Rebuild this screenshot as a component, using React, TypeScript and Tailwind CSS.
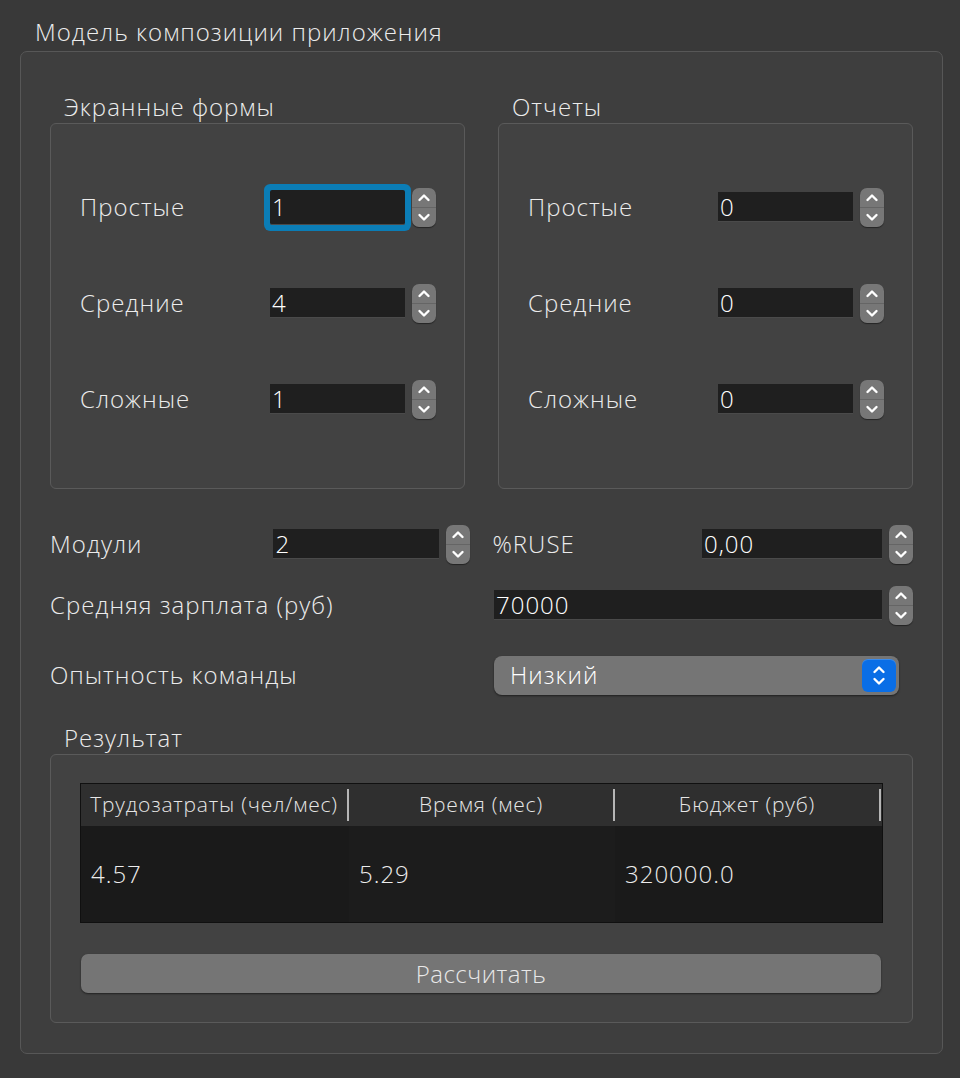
import React from 'react';

const font = { fontFamily: '"Open Sans", "Noto Sans", sans-serif' };

const Chevron = ({ up }: { up?: boolean }) => (
  <svg width="14" height="9" viewBox="0 0 14 9">
    <path
      d={up ? 'M2.5 7L7 2.5L11.5 7' : 'M2.5 2L7 6.5L11.5 2'}
      stroke="white"
      strokeWidth="2.4"
      fill="none"
      strokeLinecap="round"
      strokeLinejoin="round"
    />
  </svg>
);

const Arrows = () => (
  <div className="flex h-[39px] w-[24px] flex-col items-center justify-between rounded-[7px] bg-[#777777] py-[5px] shadow-[0_1px_1px_rgba(0,0,0,0.45)]">
    <Chevron up />
    <div className="h-px w-full bg-[#656565]" />
    <Chevron />
  </div>
);

interface SpinProps {
  value: string;
  width: string;
  focused?: boolean;
}

// input field + up/down buttons
const SpinBox: React.FC<SpinProps> = ({ value, width, focused }) => (
  <div className="flex items-center gap-[7px]">
    <div
      className={`flex h-[30px] items-center border-b border-[#4a4a4a] bg-[#1f1f1f] pl-[2px] text-[24px] font-light leading-none tracking-[1px] text-white ${width} ${
        focused ? 'h-[35px] rounded-[2px] shadow-[0_0_0_6px_#0b7db6]' : ''
      }`}
    >
      {value}
    </div>
    <Arrows />
  </div>
);

const GroupBox = ({ title, className, boxClass, children }: { title: string; className?: string; boxClass?: string; children: React.ReactNode }) => (
  <div className={`flex flex-col ${className ?? ''}`}>
    <div className="h-[33px] pl-[14px] text-[24px] font-light leading-[33px] tracking-[1px] text-[#ececec]">{title}</div>
    <div className={`rounded-[6px] border border-[#5a5a5a] bg-[#424242] ${boxClass ?? ''}`}>{children}</div>
  </div>
);

const FormRows = ({ values, focusFirst }: { values: string[]; focusFirst?: boolean }) => {
  const labels = ['Простые', 'Средние', 'Сложные'];
  return (
    <div className="flex flex-col gap-[56px] pl-[29px] pt-[63px]">
      {labels.map((l, i) => (
        <div key={l} className="flex h-[40px] items-center">
          <div className="w-[190px] text-[24px] font-light tracking-[1px] text-[#ececec]">{l}</div>
          <SpinBox value={values[i]} width="w-[135px]" focused={focusFirst && i === 0} />
        </div>
      ))}
    </div>
  );
};

const label = 'text-[24px] font-light tracking-[1px] text-[#ececec]';

export default function App() {
  return (
    <div className="h-[1078px] w-[960px] bg-[#393939] px-[20px] pt-[17px]" style={font}>
      <div className="h-[34px] pl-[15px] text-[24px] font-light leading-[30px] tracking-[1px] text-[#ececec]">
        Модель композиции приложения
      </div>

      <div className="h-[1003px] w-[923px] rounded-[7px] border border-[#575757] bg-[#3e3e3e] px-[29px] pt-[38px]">
        {/* two group boxes */}
        <div className="flex gap-[33px]">
          <GroupBox title="Экранные формы" className="w-[415px]" boxClass="h-[366px]">
            <FormRows values={['1', '4', '1']} focusFirst />
          </GroupBox>
          <GroupBox title="Отчеты" className="w-[415px]" boxClass="h-[366px]">
            <FormRows values={['0', '0', '0']} />
          </GroupBox>
        </div>

        {/* modules / ruse */}
        <div className="mt-[35px] flex h-[40px] items-center">
          <div className={`w-[224px] ${label}`}>Модули</div>
          <SpinBox value="2" width="w-[166px]" />
          <div className={`ml-[22px] w-[210px] ${label}`}>%RUSE</div>
          <SpinBox value="0,00" width="w-[180px]" />
        </div>

        <div className="mt-[21px] flex h-[40px] items-center">
          <div className={`w-[444px] ${label}`}>Средняя зарплата (руб)</div>
          <SpinBox value="70000" width="w-[388px]" />
        </div>

        <div className="mt-[30px] flex h-[40px] items-center">
          <div className={`w-[444px] ${label}`}>Опытность команды</div>
          <div className="flex h-[39px] w-[405px] items-center justify-between rounded-[8px] bg-[#757575] pl-[16px] pr-[3px] shadow-[0_1px_2px_rgba(0,0,0,0.5)]">
            <span className="text-[24px] font-light tracking-[1px] text-white">Низкий</span>
            <div className="flex h-[33px] w-[34px] flex-col items-center justify-center gap-[3px] rounded-[6px] bg-[#0a6ee6] shadow-[inset_0_1px_0_rgba(255,255,255,0.2)]">
              <Chevron up />
              <Chevron />
            </div>
          </div>
        </div>

        {/* results */}
        <GroupBox title="Результат" className="mt-[26px] w-[863px]" boxClass="h-[269px] px-[29px] pt-[28px]">
          <div className="w-[803px] border border-[#101010] bg-[#1a1a1a]">
            <div className="grid h-[42px] grid-cols-[268px_266px_266px_1fr] bg-[#2f2f2f] text-[21px] font-light tracking-[0.8px] text-[#e6e6e6]">
              {['Трудозатраты (чел/мес)', 'Время (мес)', 'Бюджет (руб)'].map((h) => (
                <div key={h} className="my-[5px] flex items-center justify-center border-r-2 border-[#b5b5b5] whitespace-nowrap">
                  {h}
                </div>
              ))}
              <div />
            </div>
            <div className="grid h-[96px] grid-cols-[268px_266px_1fr] text-[24px] font-light tracking-[1px] text-[#ececec]">
              <div className="flex items-center pl-[10px]">4.57</div>
              <div className="flex items-center bg-[#1c1c1c] pl-[10px]">5.29</div>
              <div className="flex items-center pl-[10px]">320000.0</div>
            </div>
          </div>
          <button className="ml-[1px] mt-[31px] flex h-[39px] w-[800px] items-center justify-center rounded-[7px] bg-[#757575] text-[24px] font-light tracking-[0.5px] text-[#e8e8e8] shadow-[0_1px_2px_rgba(0,0,0,0.5)]">
            Рассчитать
          </button>
        </GroupBox>
      </div>
    </div>
  );
}
